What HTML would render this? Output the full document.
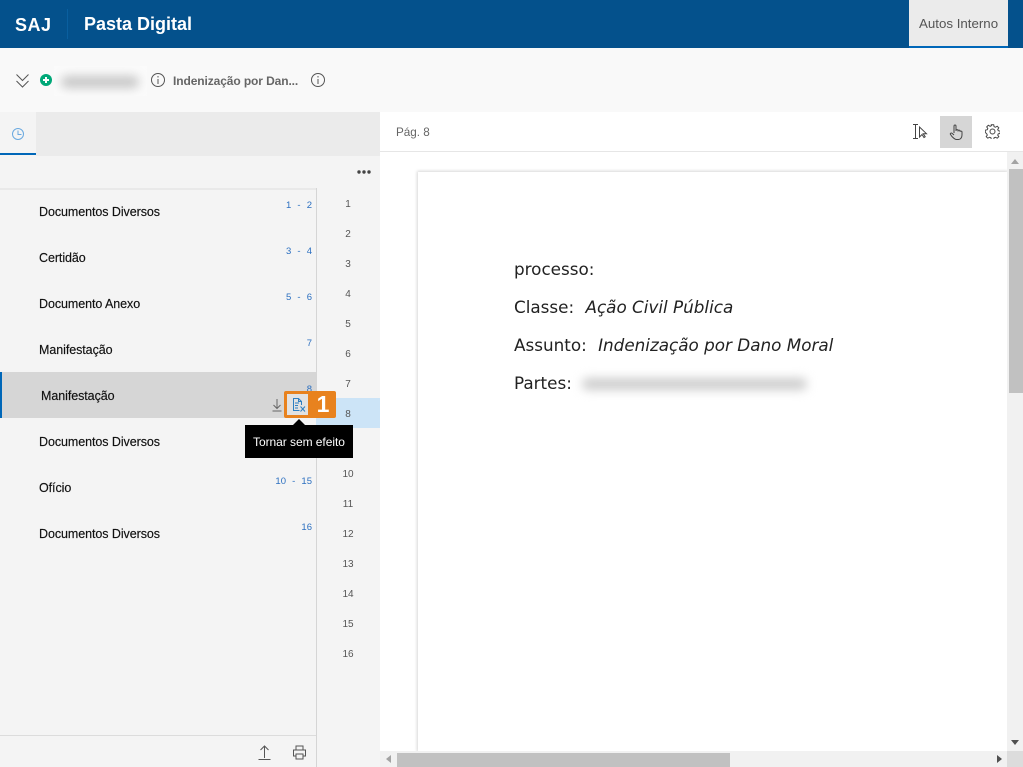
<!DOCTYPE html>
<html lang="pt"><head><meta charset="utf-8"><title>Pasta Digital</title>
<style>
*{box-sizing:border-box}
html,body{margin:0;padding:0}
body{width:1023px;height:767px;overflow:hidden;position:relative;background:#fff;font-family:"Liberation Sans",sans-serif;color:#222}
.a{position:absolute}
.t{position:absolute;white-space:nowrap}
.doc{left:39px;font-size:12.5px;color:#111;letter-spacing:-.07px;line-height:16px;-webkit-text-stroke:.15px #111}
.r{position:absolute;white-space:nowrap;font-size:9.5px;color:#2b6fc0;line-height:12px;text-align:right;right:711px;word-spacing:3.5px}
.n{position:absolute;left:316px;width:64px;text-align:center;font-size:10px;color:#555;line-height:12px;padding-right:0;margin-top:1px}
.d{left:514px;font-family:"DejaVu Sans",sans-serif;font-size:16.8px;color:#222;line-height:20px}
.d i{margin-left:6px}
</style></head><body>
<div class="a" style="left:0;top:0;width:1023px;height:48px;background:#04518c"></div>
<div class="t" style="left:15px;top:14px;font-size:18px;font-weight:bold;color:#fff;line-height:22px;letter-spacing:.5px">SAJ</div>
<div class="a" style="left:67px;top:9px;width:1px;height:30px;background:#0a5f9f"></div>
<div class="t" style="left:84px;top:12px;font-size:18px;font-weight:bold;color:#fff;line-height:24px">Pasta Digital</div>
<div class="a" style="left:909px;top:0;width:99px;height:48px;background:#ebebeb;border-bottom:2px solid #0067b8"></div>
<div class="t" style="left:919px;top:16px;font-size:13.3px;color:#555;line-height:16px">Autos Interno</div>

<div class="a" style="left:0;top:48px;width:1023px;height:64px;background:#f9f9f9"></div>
<svg class="a" style="left:15px;top:73px" width="15" height="16" fill="none" stroke="#555" stroke-width="1"><path d="M1.500 1.500l6 6 6-6M1.500 8l6 6 6-6"/></svg>
<svg class="a" style="left:40px;top:74px" width="12" height="12"><circle cx="6" cy="6" r="6" fill="#00a878"/><path d="M6 3v6M3 6h6" stroke="#fff" stroke-width="2"/></svg>
<div class="a" style="left:54px;top:66px;width:93px;height:30px;overflow:hidden;background:#fbfbfb"><div class="a" style="left:7px;top:10px;width:78px;height:12px;background:#c6c6c6;border-radius:6px;filter:blur(5px)"></div></div>
<svg class="a" style="left:150px;top:72px" width="16" height="16" fill="none" stroke="#555"><circle cx="8" cy="8" r="6.500"/><path d="M8 7v5M8 4v1.500"/></svg>
<div class="t" style="left:173px;top:73px;font-size:12px;font-weight:bold;color:#666;line-height:16px;letter-spacing:-.1px">Indenização por Dan...</div>
<svg class="a" style="left:310px;top:72px" width="16" height="16" fill="none" stroke="#555"><circle cx="8" cy="8" r="6.500"/><path d="M8 7v5M8 4v1.500"/></svg>

<div class="a" style="left:0;top:112px;width:380px;height:655px;background:#f4f4f4"></div>
<div class="a" style="left:36px;top:112px;width:344px;height:44px;background:#ebebeb"></div>
<div class="a" style="left:0;top:153px;width:36px;height:2px;background:#0067b8"></div>
<svg class="a" style="left:11px;top:127px" width="14" height="14" fill="none" stroke="#6aa9e0"><circle cx="7" cy="7" r="5.500"/><path d="M7 3.500V7.500H10.500"/></svg>
<svg class="a" style="left:356px;top:169px" width="16" height="6" fill="#444"><circle cx="3" cy="3" r="1.700"/><circle cx="8" cy="3" r="1.700"/><circle cx="13" cy="3" r="1.700"/></svg>
<div class="a" style="left:0;top:188px;width:316px;height:2px;background:#e9e9e9"></div>
<div class="a" style="left:316px;top:188px;width:1px;height:579px;background:#d5d5d5"></div>
<div class="a" style="left:0;top:735px;width:316px;height:1px;background:#dcdcdc"></div>

<div class="a" style="left:0;top:372px;width:316px;height:46px;background:#d6d6d6;border-left:2px solid #0067b8"></div>
<div class="a" style="left:316px;top:398px;width:64px;height:30px;background:#cce4f7"></div>

<div class="t doc" style="top:204px">Documentos Diversos</div>
<div class="t doc" style="top:250px">Certidão</div>
<div class="t doc" style="top:296px">Documento Anexo</div>
<div class="t doc" style="top:342px">Manifestação</div>
<div class="t doc" style="top:388px;left:41px">Manifestação</div>
<div class="t doc" style="top:434px">Documentos Diversos</div>
<div class="t doc" style="top:480px">Ofício</div>
<div class="t doc" style="top:526px">Documentos Diversos</div>

<div class="r" style="top:200px">1 - 2</div>
<div class="r" style="top:246px">3 - 4</div>
<div class="r" style="top:292px">5 - 6</div>
<div class="r" style="top:338px">7</div>
<div class="r" style="top:384px">8</div>
<div class="r" style="top:476px">10 - 15</div>
<div class="r" style="top:522px">16</div>

<div class="n" style="top:198px">1</div><div class="n" style="top:228px">2</div><div class="n" style="top:258px">3</div><div class="n" style="top:288px">4</div><div class="n" style="top:318px">5</div><div class="n" style="top:348px">6</div><div class="n" style="top:378px">7</div><div class="n" style="top:408px">8</div><div class="n" style="top:468px">10</div><div class="n" style="top:498px">11</div><div class="n" style="top:528px">12</div><div class="n" style="top:558px">13</div><div class="n" style="top:588px">14</div><div class="n" style="top:618px">15</div><div class="n" style="top:648px">16</div>

<svg class="a" style="left:271px;top:398px" width="12" height="14" fill="none" stroke="#666"><path d="M6 1v9M2.500 7L6 10.500 9.500 7M1.500 13h9"/></svg>
<div class="a" style="left:284px;top:391px;width:27px;height:27px;border:3px solid #e8821e;border-radius:2px;background:#e2e2e2"></div>
<div class="a" style="left:309px;top:391px;width:27px;height:27px;background:#e8821e;border-radius:0 2px 2px 0"></div>
<div class="t" style="left:310px;top:391px;width:26px;text-align:center;color:#fff;font-size:23px;font-weight:bold;line-height:27px">1</div>
<svg class="a" style="left:292px;top:398px" width="14" height="14" fill="none" stroke="#2f7fc1"><path d="M7.500 12.500H1.500V.5H6.500L9.500 3.500V7M6.500.5V3.500H9.500M3 5h4M3 7.500h3M3 10h3M8.500 8.500l4.500 5M13 8.500l-4.500 5"/></svg>
<div class="a" style="left:245px;top:425px;width:108px;height:33px;background:#000"></div>
<div class="a" style="left:293px;top:419px;width:0;height:0;border-left:6px solid transparent;border-right:6px solid transparent;border-bottom:6px solid #000"></div>
<div class="t" style="left:253px;top:434px;font-size:12px;color:#fff;line-height:16px;letter-spacing:-.05px">Tornar sem efeito</div>

<svg class="a" style="left:258px;top:744px" width="14" height="16" fill="none" stroke="#555"><path d="M6.500 14V2M2.500 6L6.500 2 10.500 6M.5 15.500h12"/></svg>
<svg class="a" style="left:292px;top:745px" width="16" height="15" fill="none" stroke="#555"><path d="M4 5V1h7v4M4 11H1.500V5h12v6H11M4 9h7v5H4z"/></svg>

<div class="t" style="left:396px;top:125px;font-size:11.700px;color:#666;line-height:16px">Pág. 8</div>
<div class="a" style="left:380px;top:151px;width:643px;height:1px;background:#e6e6e6"></div>
<svg class="a" style="left:912px;top:124px" width="16" height="16" fill="none" stroke="#444"><path d="M1 .5h5M1 14.500h5M3.500.5v14"/><path d="M7.500 3v10l2.500-2.500 2 3 1.200-.8-2-3H14.500z"/></svg>
<div class="a" style="left:940px;top:116px;width:32px;height:32px;background:#d6d6d6"></div>
<svg class="a" style="left:949px;top:124px" width="15" height="16" fill="none" stroke="#444"><path d="M5 9V2.200c0-1.600 2-1.600 2 0V7M7 6.500c0-1.200 2-1.200 2 0V7.500M9 7c0-1.200 2-1.200 2 0v.8M11 7.800c0-1 2-1 2 .2v3c0 2.500-1.500 4.500-3.500 4.500h-2C5.500 15.500 4.500 14 3 12.500L1.500 10.500c-.8-1 .7-2 1.500-1.200L5 11"/></svg>
<svg class="a" style="left:985px;top:124px" width="15" height="15" fill="none" stroke="#444"><circle cx="7.500" cy="7.500" r="2.500"/><path d="M6.300.7h2.400l.4 2 1.300.6 1.800-1.100 1.600 1.700-1.100 1.700.6 1.300 1.900.4v2.400l-1.900.4-.6 1.300 1.100 1.700-1.600 1.600-1.800-1-1.300.5-.4 1.900H6.300l-.4-1.900-1.300-.5-1.800 1-1.600-1.600 1.100-1.700-.6-1.300L.3 8.700V6.300l1.900-.4.600-1.300-1.100-1.700 1.600-1.700 1.800 1.100 1.300-.6z" transform="translate(0 .1) scale(1 .96)"/></svg>

<div class="a" style="left:380px;top:152px;width:627px;height:599px;background:#fff;overflow:hidden"><div class="a" style="left:38px;top:20px;width:589px;height:579px;background:#fff;box-shadow:0 0 3px 1px #d8d8d8"></div></div>
<div class="t d" style="top:259px">processo:</div>
<div class="t d" style="top:297px">Classe: <i>Ação Civil Pública</i></div>
<div class="t d" style="top:335px">Assunto: <i>Indenização por Dano Moral</i></div>
<div class="t d" style="top:373px">Partes:</div>
<div class="a" style="left:582px;top:378px;width:225px;height:12px;background:#cdcdcd;border-radius:6px;filter:blur(5px)"></div>

<div class="a" style="left:1007px;top:152px;width:16px;height:599px;background:#f1f1f1"></div>
<div class="a" style="left:1009px;top:169px;width:14px;height:224px;background:#c1c1c1"></div>
<div class="a" style="left:1011px;top:159px;width:0;height:0;border-left:4px solid transparent;border-right:4px solid transparent;border-bottom:5px solid #a3a3a3"></div>
<div class="a" style="left:380px;top:751px;width:627px;height:16px;background:#f1f1f1"></div>
<div class="a" style="left:397px;top:753px;width:333px;height:14px;background:#c1c1c1"></div>
<div class="a" style="left:1007px;top:751px;width:16px;height:16px;background:#dcdcdc"></div>
<div class="a" style="left:386px;top:755px;width:0;height:0;border-top:4px solid transparent;border-bottom:4px solid transparent;border-right:5px solid #a3a3a3"></div>
<div class="a" style="left:997px;top:755px;width:0;height:0;border-top:4px solid transparent;border-bottom:4px solid transparent;border-left:5px solid #505050"></div>
<div class="a" style="left:1011px;top:740px;width:0;height:0;border-left:4px solid transparent;border-right:4px solid transparent;border-top:5px solid #505050"></div>
</body></html>
